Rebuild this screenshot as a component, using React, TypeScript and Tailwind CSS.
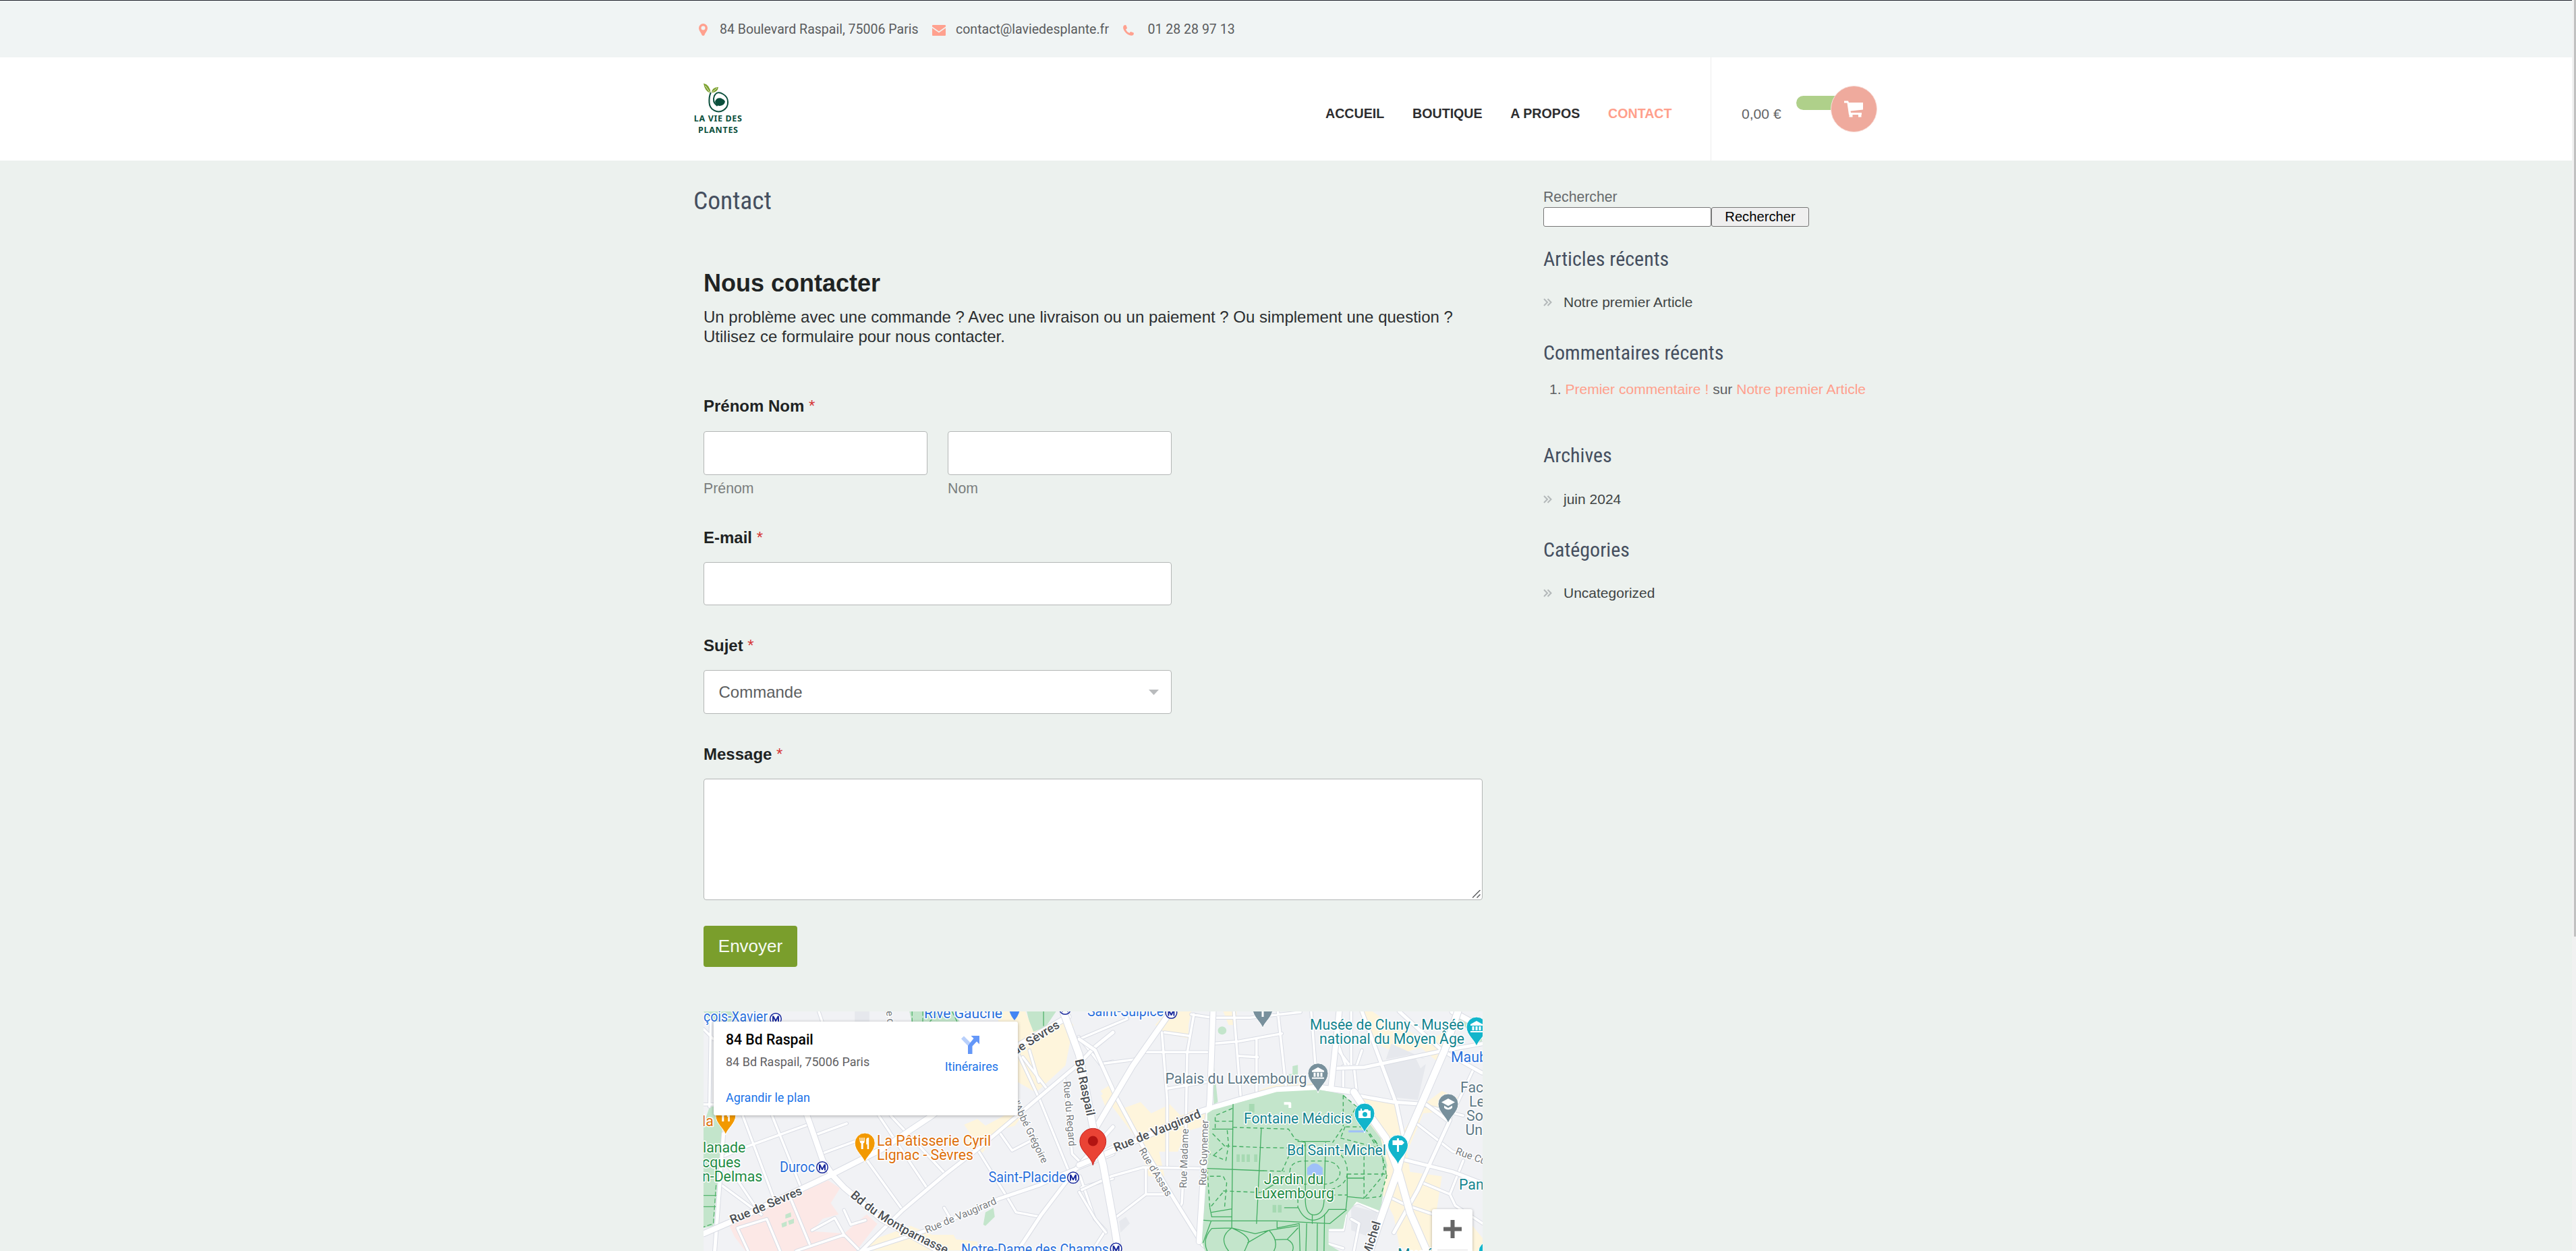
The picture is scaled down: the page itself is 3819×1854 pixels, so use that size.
import React from "react";

const nav = ["ACCUEIL", "BOUTIQUE", "A PROPOS"];

function Label({ children }: { children: string }) {
  return (
    <label className="block h-[30px] text-[24px] font-bold leading-[31px] text-[#1f2323]">
      {children} <span className="font-normal text-[#d63637]">*</span>
    </label>
  );
}

function Title({ children, className }: { children: string; className: string }) {
  return (
    <h3 className={"h-9 font-['Roboto_Condensed'] text-[30px] leading-[37px] text-[#454f5f] " + className}>{children}</h3>
  );
}

function Entry({ children, className }: { children: string; className: string }) {
  return (
    <div className={"flex h-7 items-center text-[21px] leading-7 text-[#3f4444] " + className}>
      <svg className="mr-[17px] h-[12px] w-[13px]" viewBox="0 0 13 12" fill="none" stroke="#b3b8b9" strokeWidth="2">
        <path d="M1 1l5 5-5 5M6.500 1l5 5-5 5" />
      </svg>
      {children}
    </div>
  );
}

/* Roads are drawn twice: a grey casing, then the white carriageway. */
function Roads({ d, w }: { d: string; w: number }) {
  return (
    <>
      <path d={d} stroke="#d9dce4" strokeWidth={w + 2} vectorEffect="non-scaling-stroke" />
      <path d={d} stroke="#fff" strokeWidth={w} vectorEffect="non-scaling-stroke" />
    </>
  );
}

function Pin({ x, y, fill, children }: { x: number; y: number; fill: string; children?: React.ReactNode }) {
  return (
    <g transform={`translate(${x} ${y})`}>
      <path d="M0 29C-2 20-15 12-15 0a15 15 0 0 1 30 0C15 12 2 20 0 29z" fill={fill} stroke="#fff" strokeWidth="1" />
      <g fill="#fff" stroke="none">{children}</g>
    </g>
  );
}

function Metro({ x, y }: { x: number; y: number }) {
  return (
    <g transform={`translate(${x} ${y})`}>
      <circle r="8.300" fill="#fff" stroke="#1a2a9c" strokeWidth="1.500" />
      <path d="M-5 4.500V-4.500h2.200L0 1l2.800-5.500H5v9H3V-.500L.700 4h-1.400L-3-.500v5z" fill="#1a2a9c" />
    </g>
  );
}

const fork = <path d="M-8-8h1.500v5h1.500v-5h1.500v5H-2v-5h1.500v6q0 2-2 2.500V9h-3V.500q-1.500-.500-2-2.500zM2-5q0-3 4-3V9H3.500V2H2z" />;
const museum = <path d="M0-9L9-4v2H-9v-2zM-6.500-1h3v6h-3zM-1.500-1h3v6h-3zM3.500-1h3v6h-3zM-9 6H9v2H-9z" />;

function MapLabel({
  x, y, fill, size = 21.3, rotate = 0, anchor = "start", weight = 400, length, children,
}: {
  x: number; y: number; fill: string; size?: number; rotate?: number;
  anchor?: "start" | "middle" | "end"; weight?: number; length?: number; children: string;
}) {
  return (
    <text
      transform={`translate(${x} ${y}) rotate(${rotate})`}
      fill={fill} fontSize={size} textAnchor={anchor} fontWeight={weight}
      textLength={length} lengthAdjust="spacingAndGlyphs"
      stroke="#fff" strokeWidth="3" strokeLinejoin="round" paintOrder="stroke"
    >
      {children}
    </text>
  );
}

const BLUE = "#2a6fdb";
const TEAL = "#12848f";
const SLATE = "#5d7886";
const GREEN = "#1e8a43";
const ROAD = "#4b4f54";
const STREET = "#777b80";

function StreetMap() {
  return (
    <svg className="block h-[355px] w-[1155px] font-[Roboto]" viewBox="0 0 1155 355">
      <rect width="1155" height="355" fill="#f1f2f5" />
      <g transform="scale(.3954 .3333) translate(-33 -57)" fill="none" strokeLinecap="round" strokeLinejoin="round">
        {/* Parks, shopping areas and the hospital of the western half */}
        <path fill="#c3e5cb" d="M33 57h140l-30 50H60zM56 480h55L70 1010l-37 10V560z M805 57h170l20 50H815zM1245 57h110l-40 70-50 30z" />
        <path fill="#fef5dc" d="M1130 57h110l30 90 130-60 20 30-30 180-110 120-90-60zM1010 560l50-25 30 30 110-70 50-10-50 80-60 20-60 100-70-30 20-60zM650 1080l160-70 80 40 80 0 10 20 80 10v40H650z M1568 400l-45 30 20 60 25-20z" />
        <path fill="#fce8e6" d="M130 1010l200-110 170-92 45 35-35 66 30 50-60 20-40 55 120 10 85-85 40 42-80 121H190l-40-62z" />
        <path fill="#c3e5cb" d="M340 960l20-10 2 20-22 8zM325 1000l20-10 0 20-17 8zM350 988l22-10v20l-18 8zM1090 950l30-20 5 40-35 40-8-5z" />
        <path fill="#e6e8ed" d="M600 57h55v50h-55z" />
        <Roads w={3.5} d="M33 135L70 180M60 90L55 480M33 470H75M180 520L300 900M290 520L395 830M190 660L425 560M455 605L570 555M475 690L600 635M690 520L870 840M735 520L940 780M640 710L780 940M1060 670L1170 880 1205 950 1295 970M1140 590L1190 675 1280 620M1211 240L1290 440 1400 760M1230 260L1320 400M1385 350L1415 690 1440 720M1445 790L1500 980 1540 1030 1490 1122M1450 840L1568 800M1520 290L1568 280M1440 170L1520 290M1255 230L1290 370M160 1020L270 980 320 1122M160 1020L200 1122M360 890L430 1090M380 1122L560 1050 620 1122M440 1030L525 975 560 1050M560 940L585 1005 640 985M935 930L960 980M100 700L230 930M90 820L250 960M110 700L190 660M465 57L480 110M720 57L740 110" />
        <Roads w={5} d="M600 1150L780 940 940 780 1060 670 1290 440 1440 290 1500 215 1568 150M560 1150L870 1030 1140 890 1290 830 1380 780 1568 690M1568 570L1440 740 1300 960 1210 1122M108 600L75 1122M1440 740L1568 660" />
        <Roads w={8} d="M33 1045L150 985 500 790 700 670 890 520 1211 210 1400 80M415 500L445 600 480 720 520 790 560 840 700 980 960 1150" />
        <path stroke="#54b36d" strokeWidth="1.300" vectorEffect="non-scaling-stroke" strokeDasharray="6 4" d="M815 57V105M855 57V105M965 57L985 105M80 830L70 1000 33 1015" />
        <path stroke="#54b36d" strokeWidth="1.300" vectorEffect="non-scaling-stroke" d="M33 875H80M33 925H78M1308 57V120M880 105L910 60" />
      </g>
      <g transform="scale(.3954 .3333) translate(1408.5 -57)" fill="none" strokeLinecap="round" strokeLinejoin="round">
        {/* Latin Quarter blocks */}
        <path fill="#fef5dc" d="M330 57h90l-10 60 0 60-80-20-45-40zM540 57h50v60h-30zM1050 57h50l60 50 150 80 60-40 40 70-70 60-60-60-80 30-90-50zM1050 430l130 20 30 150 60-110 90-80 60 30-50 60-80 10-60 170 10 90 120 20-20 150 100 20 90 130v150l-190-60-140-80-20-130-80-190-60-90zM80 410l40-30 40 110 70-30 40 50 70-40 40 50 60-30 80 0v60l-120 40-30 90h-70l20 110-60 0-40-160zM690 400l40-15 150-10 30 15-170 20-130 35z" />
        <path fill="#e6e8ed" d="M1140 290l120-30 20 50 20-20-30 160-80-10zM1170 200l130 70-60-20-90 20zM1020 920l100 30-30 110-70-30zM150 990l25-20 15 30-35 40z" />
        <path fill="#c3e5cb" d="M500 240l20 220-15 10zM520 142a15 17 0 1 0 32 0 15 17 0 1 0-32 0M800 300l20-5v80l-35-10v-30h15z M1420 90h90v120z" />
        <Roads w={3.5} d="M430 70L405 240 400 560 385 910 375 930M310 150L330 450 330 740M580 57L605 430M665 180V420M745 60L775 390M420 70L500 85 640 85 830 60M320 150L410 165M500 200L600 190 760 155M250 238H480M80 290L210 270M600 255L670 260M330 400L480 370M120 790L240 750 470 755M10 850L120 790M250 750V870H340M140 970L250 870M0 860L60 980 100 1040M870 57L885 290M940 180L1010 290M970 200L1000 300 1040 300 1060 230M1020 57V290M990 300V400M1030 300L1040 410M1270 560L1400 680 1510 720M1290 820L1390 870 1410 920 1513 1000M1480 310L1380 560M1440 720L1390 870M1160 880L1230 920 1330 960M1280 470L1440 520M1000 960L990 1030H940M935 1090L990 1110M1020 920L1045 905 1120 945M1020 980L1050 1000 1030 1122M165 57L180 90 0 180" />
        <Roads w={5} d="M0 180L60 230 140 440 240 660 350 880 460 1090 490 1122M960 310L1070 305 1370 230 1513 200M1040 430L1180 460 1300 470 1380 540M1215 715L1400 770 1510 820M1390 540L1270 850 1180 1040M1200 57L1360 230 1510 330M1060 57L1130 280 1190 470 1215 610" />
        <Roads w={8} d="M502 57L490 450 470 700 450 1080M945 390L975 57M330 80L200 300 50 600M0 740L120 680 460 500 600 450 740 405 900 395 1030 415M1400 57L1513 130" />
        <path fill="#c3e5cb" d="M500 495l240-80 160-10 90 20 70 85 70 110 25 120-25 205-90-42-40 60-10 60h-55v70l55 40H475l-15-50 20-330V510z" />
        <path fill="#a6d9b2" d="M637 468h20v38h-20zM590 692h12v34h-12zM609 692h12v34h-12zM628 692h12v34h-12zM656 692h12v34h-12zM725 917h14v34h-14zM745 917h14v34h-14z" />
        <path fill="#9fc0f8" d="M855 752l14-15q14-8 28 0l16 15v32H855zM1010 586h65v9h-65z" />
        <path stroke="#fff" strokeWidth="4" strokeLinecap="butt" vectorEffect="non-scaling-stroke" d="M768 466H790V486" />
        <path stroke="#43ad62" strokeWidth="1.300" vectorEffect="non-scaling-stroke" d="M577 470L572 1020M683 575L665 1000M480 755L690 765 M848 640V900Q850 960 880 962 915 960 918 900L924 640M820 635H940M770 930H822Q840 980 874 985 910 985 936 937H1000L1005 880M495 988H740L940 1000 1002 940M467 985L495 988M1005 780V880L1068 888M1005 798H1068M490 930L497 970H572M497 950L572 935M500 580H577M683 860L780 790M825 1000L828 1122M853 1000L850 1122M893 1000L892 1122M920 960L918 1122M742 990V1020L825 1000M480 1122Q460 1070 497 1022L572 1020 660 1045 712 1030 820 1010M572 1020Q520 1060 560 1122M572 1020Q650 1060 632 1090L620 1122M632 1085L712 1030Q750 1080 730 1122M735 1072L780 1070Q810 1090 800 1122M820 1020L780 1070M495 988L465 1085M874 962V1000" />
        <path stroke="#43ad62" strokeWidth="1.400" strokeDasharray="6 4" strokeLinecap="butt" vectorEffect="non-scaling-stroke" d="M510 575V520L575 488M510 545H577M577 572L785 580 810 625 850 640M550 655L683 662 790 664M555 585L560 650 550 720 490 690M500 600L545 655 500 700M690 765L770 768M760 768L790 690 850 650M790 770Q790 725 840 722H920Q975 725 978 775 975 820 920 825H840Q795 820 790 770M490 790H540L553 820 545 930M480 760L490 930 540 860M540 855L680 862M820 890V930M990 430V570L950 640M990 430L1040 480 1000 560 980 620M1000 570H1070L1110 650M980 620L1110 660M1005 780H1150M1068 700V888M1110 630Q1160 740 1130 800L1068 888 1130 880 1155 780M940 660Q1010 700 1005 780 1000 840 920 855M945 873H1005M1090 600Q1150 700 1152 800" />
        <Roads w={10} d="M-60 57L0 250 50 560 90 740 130 1000 152 1160M1420 57L1370 230 1290 450 1220 640 1190 780 1130 980 1085 1140M1030 415L1060 470 1150 620 1200 780 1240 950 1310 1140" />
      </g>

      <MapLabel x={0} y={15.3} length={95} fill={BLUE}>çois-Xavier</MapLabel>
      <Metro x={107} y={11} />
      <MapLabel x={327} y={9.5} length={116} fill={BLUE}>Rive Gauche</MapLabel>
      <path d="M453 -4h16q-1 9-8 17-7-8-8-17z" fill="#4285f4" />
      <MapLabel x={269} y={-18} rotate={84} size={15} fill={STREET}>Rue du</MapLabel>
      <MapLabel x={569} y={6.5} length={113} fill={BLUE}>Saint-Sulpice</MapLabel>
      <Metro x={693.4} y={2} />
      <Metro x={536} y={-4} />
      <MapLabel x={529} y={23} rotate={-32} size={18} weight={500} anchor="end" fill={ROAD}>Rue de Sèvres</MapLabel>
      <MapLabel x={550.4} y={72} rotate={78} size={18} weight={500} fill={ROAD}>Bd Raspail</MapLabel>
      <MapLabel x={533.4} y={103.700} rotate={85} size={15} fill={STREET}>Rue du Regard</MapLabel>
      <MapLabel x={502} y={226} rotate={64} size={15} anchor="end" fill={STREET}>Rue de l'Abbé Grégoire</MapLabel>
      <MapLabel x={42.3} y={315} rotate={-23} size={18} weight={500} fill={ROAD}>Rue de Sèvres</MapLabel>
      <path id="montparnasse" d="M217 274Q275 325 375 366" fill="none" />
      <text fontSize="18" fontWeight="500" fill={ROAD} stroke="#fff" strokeWidth="3" paintOrder="stroke">
        <textPath href="#montparnasse">Bd du Montparnasse</textPath>
      </text>
      <MapLabel x={331} y={329} rotate={-23} size={15} fill={STREET}>Rue de Vaugirard</MapLabel>
      <MapLabel x={611} y={208} rotate={-22} size={18} weight={500} fill={ROAD}>Rue de Vaugirard</MapLabel>
      <MapLabel x={645} y={206} rotate={59} size={15} fill={STREET}>Rue d'Assas</MapLabel>
      <MapLabel x={716} y={262} rotate={-88} size={15} fill={STREET}>Rue Madame</MapLabel>
      <MapLabel x={745} y={258} rotate={-88} size={15} fill={STREET}>Rue Guynemer</MapLabel>
      <MapLabel x={1114} y={211} rotate={20} size={15} fill={STREET}>Rue Cujas</MapLabel>
      <MapLabel x={1004} y={313} rotate={-73} size={18} weight={500} anchor="end" fill={ROAD}>Bd Saint-Michel</MapLabel>

      <MapLabel x={-2} y={170} fill="#dd6f0a">la</MapLabel>
      <Pin x={32.8} y={154} fill="#f29900">{fork}</Pin>
      <MapLabel x={-1} y={209} fill={GREEN}>lanade</MapLabel>
      <MapLabel x={-2} y={230.500} fill={GREEN}>cques</MapLabel>
      <MapLabel x={-2} y={251.500} fill={GREEN}>n-Delmas</MapLabel>
      <MapLabel x={113} y={238} length={52} fill={BLUE}>Duroc</MapLabel>
      <Metro x={176} y={231} />
      <Pin x={239.2} y={195} fill="#f29900">{fork}</Pin>
      <MapLabel x={257} y={199.3} fill="#dd6f0a">La Pâtisserie Cyril</MapLabel>
      <MapLabel x={257} y={220} fill="#dd6f0a">Lignac - Sèvres</MapLabel>
      <MapLabel x={422.500} y={252.700} length={115} fill={BLUE}>Saint-Placide</MapLabel>
      <Metro x={548} y={246.3} />
      <MapLabel x={382} y={360} length={219} fill={BLUE}>Notre-Dame des Champs</MapLabel>
      <Metro x={611.6} y={351.500} />

      <Pin x={829} y={-4} fill="#78909c"><path d="M-1.500-10h3V12h-3z" /></Pin>
      <MapLabel x={684.500} y={106.700} fill={SLATE}>Palais du Luxembourg</MapLabel>
      <Pin x={911} y={91.700} fill="#78909c">{museum}</Pin>
      <MapLabel x={1127.5} y={26.700} length={228.5} anchor="end" fill={TEAL}>Musée de Cluny - Musée</MapLabel>
      <MapLabel x={1128} y={47.700} length={215} anchor="end" fill={TEAL}>national du Moyen Âge</MapLabel>
      <Pin x={1146} y={23} fill="#12b5cb">{museum}</Pin>
      <MapLabel x={1108} y={74.700} fill={BLUE}>Maub</MapLabel>
      <MapLabel x={1122} y={119.700} fill={SLATE}>Fac</MapLabel>
      <MapLabel x={1135} y={140.500} fill={SLATE}>Le</MapLabel>
      <MapLabel x={1131} y={162} fill={SLATE}>So</MapLabel>
      <MapLabel x={1129.500} y={183} fill={SLATE}>Un</MapLabel>
      <Pin x={1104} y={137} fill="#78909c"><path d="M0-8l10 5.500L0 3l-10-5.500zM-6 2.500L0 6l6-3.500V6Q0 11-6 6z" /></Pin>
      <MapLabel x={801} y={166} length={160} fill={TEAL}>Fontaine Médicis</MapLabel>
      <Pin x={980} y={151} fill="#12b5cb">
        <path d="M-9-4h3v-3h2v3h3l1-2h5l1 2h3V7H-9z" />
        <circle cx="0.500" cy="1.500" r="3.500" fill="#12b5cb" />
      </Pin>
      <MapLabel x={865} y={212.700} length={147} fill={TEAL}>Bd Saint-Michel</MapLabel>
      <Pin x={1029.5} y={198} fill="#12b5cb"><path d="M-1.500-10h3v3H6l3.500 3.500L6 0H1.500v10h-3V0H-8v-7h6.500z" /></Pin>
      <MapLabel x={1120} y={263.700} fill={TEAL}>Pan</MapLabel>
      <MapLabel x={875} y={256} anchor="middle" fill={GREEN}>Jardin du</MapLabel>
      <MapLabel x={876} y={277} anchor="middle" fill={GREEN}>Luxembourg</MapLabel>
      <MapLabel x={1029} y={367} fill={TEAL}>Musé</MapLabel>
      <Pin x={1164} y={356} fill="#12b5cb" />

      <path d="M577.300 228c-2-13-19.400-20-19.400-35.300a19.400 19.400 0 0 1 38.800 0C596.700 208 579.300 215 577.300 228z" fill="#ea4335" stroke="#c5221f" strokeWidth="1" />
      <circle cx="577.300" cy="192" r="7.500" fill="#b31412" />
    </svg>
  );
}

export default function App() {
  return (
    <div className="flex h-[1854px] w-[3819px] overflow-hidden bg-[#ecf1ee] font-['Liberation_Sans',sans-serif]">
      <div className="w-[3813px] overflow-hidden">
        <div className="flex h-[85px] items-center border-t border-[#20232b] bg-[#f0f4f4] pl-[1036px] pt-px font-[Roboto] text-[19.550px] text-[#5b5c5e]">
          <svg className="h-[18px] w-[13px]" viewBox="0 0 13 18" fill="#ffa18f">
            <path fillRule="evenodd" d="M6.500 0A6.500 6.500 0 0 1 13 6.500C13 11 9 14 8.500 17q-2 2-4 0C4 14 0 11 0 6.500A6.500 6.500 0 0 1 6.500 0zm0 3.500a3 3 0 1 0 0 6 3 3 0 0 0 0-6z" />
          </svg>
          <span className="ml-[18px] w-[295px] whitespace-nowrap">84 Boulevard Raspail, 75006 Paris</span>
          <svg className="ml-[20px] mt-[2px] h-[16px] w-5" viewBox="0 0 20 16" fill="#ffa18f">
            <path d="M1 0h18q1 0 1 1v1.500l-10 7-10-7V1q0-1 1-1zM0 4.500l10 7 10-7V15q0 1-1 1H1q-1 0-1-1z" />
          </svg>
          <span className="ml-[15px] w-[227px] whitespace-nowrap">contact@laviedesplante.fr</span>
          <svg className="ml-[21px] mt-[3px] h-[16px] w-4" viewBox="0 0 16 16" fill="#ffa18f">
            <path d="M1 1Q3-.500 4.500.500L6 4.500Q5.500 6 4 6.500 5.500 10.500 9.500 12 10 10.500 11.500 10l4 1.500q1 1.500-.500 3.500Q12 17 7 14 2 10.500.500 6-.500 3 1 1z" />
          </svg>
          <span className="ml-[20.500px] whitespace-nowrap">01 28 28 97 13</span>
        </div>

        <header className="flex h-[153px] bg-white pl-[1028px]">
          <div className="mt-[37px] h-[80px] w-[73px]">
            <svg className="h-[80px] w-[73px]" viewBox="0 0 73 80">
              <path d="M15 1.500Q25 4 25.500 16q-8.500-2-10.500-14.500zM27 15.500Q27 7.500 37 7q-1 8-10 8.500z" fill="#7ba02c" />
              <path d="M17.500 5Q21 10 24.500 15M35 8.500L28 14.500" stroke="#fff" strokeWidth=".8" fill="none" />
              <path d="M25.500 16Q23 21 23.500 30A13.800 13.800 0 1 0 44 17.500Q35 12 31 20 27.500 29 35 34.500" fill="none" stroke="#0b4f3c" strokeWidth="2" strokeLinecap="round" />
              <path d="M32 28.500Q34 22.500 41 23.500 45 25 47 28.500 46 34 39 35 33 34.500 32 28.500z" fill="#0b4f3c" />
              <g fill="#0b4f3c" fontFamily="Noto Sans" fontWeight="700" fontSize="12.500">
                <text x="0.800" y="58" textLength="71">LA VIE DES</text>
                <text x="7" y="75" textLength="59">PLANTES</text>
              </g>
            </svg>
          </div>
          <nav className="ml-[864px] flex h-[153px] w-[572px] items-center gap-[41.700px] whitespace-nowrap border-r border-[#ededed] pt-[15px] text-[19.650px] font-bold text-[#2d2d2f]">
            {nav.map((n) => (
              <a key={n}>{n}</a>
            ))}
            <a className="text-[#ff9f8c]">CONTACT</a>
          </nav>
          <div className="ml-[45px] flex h-[153px] items-center">
            <span className="w-[81px] whitespace-nowrap pt-[15px] text-[21.1px] text-[#636466]">0,00 €</span>
            <div className="-mt-[18px] h-[21px] w-[66px] rounded-l-full bg-[#afd08a]" />
            <div className="-ml-[15px] flex size-[69px] items-center justify-center rounded-full border border-[#f8ded9] bg-[#efaa9d]">
              <svg className="h-[25px] w-[29px]" viewBox="0 0 29 25" fill="#fff">
                <path d="M0 .500h6l1 2.500h21v10.500L9.500 15.500 10 18h16v3H7L4.500 3.500H0zM7.500 21h5v3.500h-5zM21 21h4.500v3.500H21z" />
              </svg>
            </div>
          </div>
        </header>

        <div className="flex pl-[1028px]">
          <main className="w-[1260px] pt-[39px]">
            <h1 className="h-10 font-['Roboto_Condensed'] text-[37.500px] leading-10 text-[#454f5f]">Contact</h1>
            <div className="ml-[15px] w-[1155px]">
              <h2 className="mt-[79px] h-12 text-[36px] font-bold leading-[48px] text-[#1f2323]">Nous contacter</h2>
              <p className="mt-[11px] whitespace-nowrap text-[24px] leading-[29px] text-[#2b2e30]">
                Un problème avec une commande ? Avec une livraison ou un paiement ? Ou simplement une question ?
                <br />
                Utilisez ce formulaire pour nous contacter.
              </p>
              <div className="mt-[73px]">
                <Label>Prénom Nom</Label>
                <div className="mt-[23px] flex gap-[30px] text-[21.300px] leading-6 text-[#7b7f7e]">
                  <div>
                    <div className="h-[65px] w-[332px] rounded-[4px] border border-[#b3b6b5] bg-white" />
                    <div className="mt-2">Prénom</div>
                  </div>
                  <div>
                    <div className="h-[65px] w-[332px] rounded-[4px] border border-[#b3b6b5] bg-white" />
                    <div className="mt-2">Nom</div>
                  </div>
                </div>
              </div>
              <div className="mt-[45px]">
                <Label>E-mail</Label>
                <div className="mt-[22px] h-16 w-[693.500px] rounded-[4px] border border-[#b3b6b5] bg-white" />
              </div>
              <div className="mt-[44px]">
                <Label>Sujet</Label>
                <div className="mt-[22px] flex h-[65px] w-[693.500px] items-center justify-between rounded-[4px] border border-[#b3b6b5] bg-white pl-[21.500px] pr-[18px] text-[24px] text-[#5c5e60]">
                  Commande
                  <svg className="h-2 w-[15px]" viewBox="0 0 15 8" fill="#b9bbbd"><path d="M0 0h15L7.500 8z" /></svg>
                </div>
              </div>
              <div className="mt-[44px]">
                <Label>Message</Label>
                <div className="mt-[22px] flex h-[180px] w-[1155px] items-end justify-end rounded-[4px] border border-[#b3b6b5] bg-white p-[2px]">
                  <svg className="h-[12px] w-[12px]" viewBox="0 0 12 12" stroke="#5d5f61" strokeWidth="1.500"><path d="M0 11.500L11.500 0M6.500 11.500l5-5" /></svg>
                </div>
              </div>
              <button className="mt-[38px] flex h-[61px] w-[139px] items-center justify-center rounded-[4px] bg-[#7a9e2c] text-[26px] text-[#f6faf3]">Envoyer</button>
              <div className="relative mt-[66px] h-[355px] w-[1155px] overflow-hidden">
                <StreetMap />
                <div className="absolute left-[15px] top-[15px] flex h-[139px] w-[451px] justify-between rounded-[3px] bg-white pl-[18px] pr-[29px] font-[Roboto] text-[18px] shadow-[0_1px_5px_rgba(0,0,0,0.3)]">
                  <div className="pt-[14px]">
                    <div className="text-[21.200px] font-medium leading-[26px] text-black">84 Bd Raspail</div>
                    <div className="mt-[8px] leading-6 text-[#5f6062]">84 Bd Raspail, 75006 Paris</div>
                    <div className="mt-[29px] leading-6 text-[#1a73e8]">Agrandir le plan</div>
                  </div>
                  <div className="flex flex-col items-center pt-[21px] text-[#1a73e8]">
                    <svg className="-ml-[3px] h-[27px] w-[27px]" viewBox="0 0 27 27">
                      <path d="M0 4.500L4 .500l10 10-4.500 4z" fill="#b9d0fb" />
                      <path d="M14.500 0H27v12.500l-4-4-6.500 7V27H10V14.500L18.500 4z" fill="#6497f8" />
                    </svg>
                    <div className="mt-[7px] leading-6">Itinéraires</div>
                  </div>
                </div>
                <div className="absolute right-[15px] top-[293px] flex h-[62px] w-[60px] flex-col items-center rounded-t-[3px] bg-white pt-[16px] shadow-[0_1px_4px_rgba(0,0,0,0.3)]">
                  <svg className="h-[27px] w-[27px]" viewBox="0 0 27 27" fill="#666"><path d="M10.500 0h6v10.500H27v6H16.500V27h-6V16.500H0v-6h10.500z" /></svg>
                  <div className="mt-[17px] h-px w-[45px] bg-[#e0e0e0]" />
                </div>
              </div>
            </div>
          </main>

          <aside className="w-[530px] pt-[39px]">
            <div className="h-7 text-[21.200px] leading-[29px] text-[#66696b]">Rechercher</div>
            <div className="mt-[2px] flex">
              <div className="h-[29px] w-[249px] rounded-[3px] border border-[#767676] bg-white" />
              <div className="h-[29px] w-[145px] rounded-[3px] border border-[#767676] bg-[#efefef] text-center text-[20.200px] leading-[27px] text-black">Rechercher</div>
            </div>
            <Title className="mt-[29px]">Articles récents</Title>
            <Entry className="mt-[33px]">Notre premier Article</Entry>
            <Title className="mt-[42px]">Commentaires récents</Title>
            <div className="mt-[22px] h-7 whitespace-nowrap pl-[9px] text-[21.050px] leading-[29px] text-[#5c6062]">
              1. <span className="text-[#ff9f8c]">Premier commentaire !</span> sur <span className="text-[#ff9f8c]">Notre premier Article</span>
            </div>
            <Title className="mt-[66px]">Archives</Title>
            <Entry className="mt-[34px]">juin 2024</Entry>
            <Title className="mt-[42px]">Catégories</Title>
            <Entry className="mt-[33px]">Uncategorized</Entry>
          </aside>
        </div>
      </div>
      <div className="h-full w-[6px] bg-[#f1f1f1] pl-[3px]">
        <div className="h-[1388px] w-[3px] bg-[#c1c1c1]" />
      </div>
    </div>
  );
}
